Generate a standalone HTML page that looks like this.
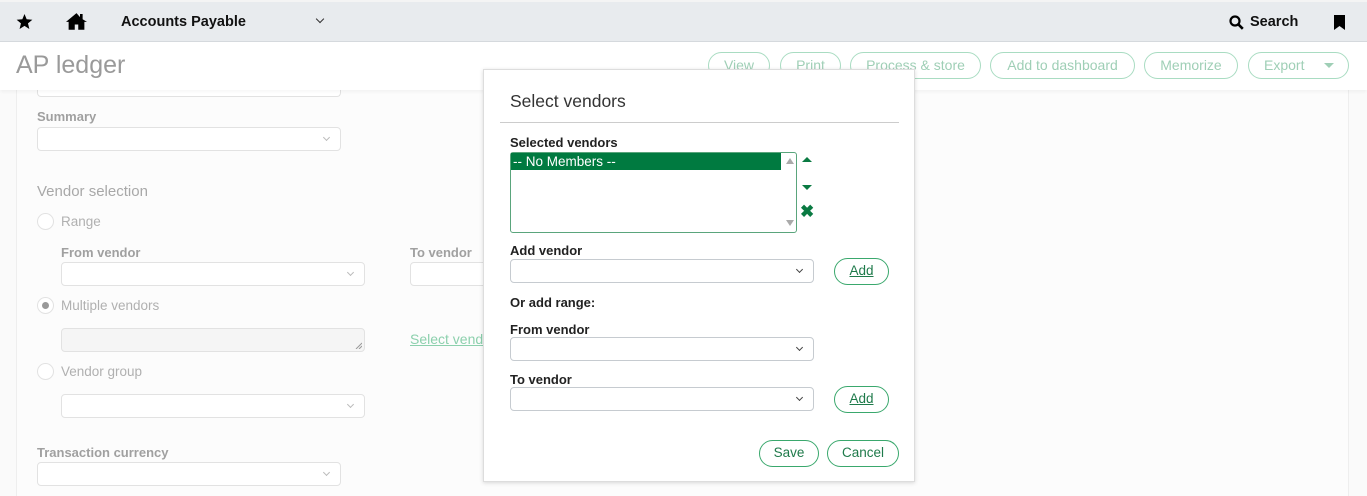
<!DOCTYPE html>
<html><head><style>
*{box-sizing:border-box;margin:0;padding:0}
body{width:1367px;height:496px;overflow:hidden;background:#fafafa;font-family:"Liberation Sans",sans-serif;position:relative}
.a{position:absolute}
.top{left:0;top:0;width:1367px;height:42px;background:#e8ebee;border-bottom:1px solid #d5d9dd;border-top:2px solid #f4f4f4}
.hdr{left:0;top:42px;width:1367px;height:48px;background:#fff;box-shadow:0 2px 3px rgba(0,0,0,.04);z-index:2}
.pbtn{position:absolute;top:52px;height:27px;border:1.5px solid #a9dcc2;border-radius:14px;color:#9fcfb6;font-size:14px;line-height:24px;text-align:center;background:#fff;z-index:3}
.lbl{position:absolute;font-size:13px;color:#a0a0a0;font-weight:bold}
.sel{position:absolute;height:24px;border:1px solid #e2e2e2;border-radius:4px;background:#fff}
.sel:after{content:"";position:absolute;right:11px;top:7px;width:4px;height:4px;border-right:1px solid #bbb;border-bottom:1px solid #bbb;transform:rotate(45deg)}
.rad{position:absolute;width:17px;height:17px;border:1px solid #e2e2e2;border-radius:50%;background:#fff}
.rt{position:absolute;font-size:13.5px;color:#b0b0b0}
.modal{left:483px;top:69px;width:432px;height:413px;background:#fff;border:1px solid #ddd;box-shadow:0 1px 4px rgba(0,0,0,.15);z-index:5}
.ml{position:absolute;font-size:13px;color:#222;font-weight:bold}
.ms{position:absolute;height:24px;border:1px solid #c6cbd0;border-radius:4px;background:#fff}
.ms:after{content:"";position:absolute;right:11px;top:7px;width:4px;height:4px;border-right:1.3px solid #444;border-bottom:1.3px solid #444;transform:rotate(45deg)}
.gb{position:absolute;height:27px;border:1.5px solid #3aa86d;border-radius:14px;color:#1e7a4a;font-size:13.5px;line-height:24px;text-align:center;background:#fff}
</style></head><body>
<div class="a top">
 <svg class="a" style="left:16px;top:12px" width="17" height="16" viewBox="0 0 24 23"><path d="M12 0l3.1 7.6 8.2.6-6.3 5.3 2 8L12 17.1 4.9 21.5l2-8L.7 8.2l8.2-.6z" fill="#000"/></svg>
 <svg class="a" style="left:66px;top:10px" width="21" height="18" viewBox="0 0 24 20"><path d="M12 1L0 11h3v9h7v-6h4v6h7v-9h3L19 8V2h-3v3.5z" fill="#000"/></svg>
 <div class="a" style="left:121px;top:12px;font-size:14.5px;font-weight:bold;color:#111">Accounts Payable</div>
 <div class="a" style="left:317px;top:14px;width:6px;height:6px;border-right:1.5px solid #333;border-bottom:1.5px solid #333;transform:rotate(45deg)"></div>
 <svg class="a" style="left:1229px;top:13px" width="15" height="15" viewBox="0 0 15 15"><circle cx="6" cy="6" r="4.5" stroke="#000" stroke-width="2.2" fill="none"/><path d="M9.3 9.3l4.5 4.5" stroke="#000" stroke-width="2.6"/></svg>
 <div class="a" style="left:1250px;top:12px;font-size:14.5px;font-weight:bold;color:#111">Search</div>
 <svg class="a" style="left:1334px;top:13px" width="11" height="15" viewBox="0 0 11 15"><path d="M0 0h11v15l-5.5-4L0 15z" fill="#000"/></svg>
</div>
<div class="a hdr">
 <div class="a" style="left:16px;top:9px;font-size:25px;color:#9a9a9a">AP ledger</div>
</div>
<div class="pbtn" style="left:708px;width:62px">View</div>
<div class="pbtn" style="left:780px;width:61px">Print</div>
<div class="pbtn" style="left:850px;width:131px">Process &amp; store</div>
<div class="pbtn" style="left:990px;width:145px">Add to dashboard</div>
<div class="pbtn" style="left:1144px;width:94px">Memorize</div>
<div class="pbtn" style="left:1248px;width:101px;text-align:left;padding-left:15px">Export<span style="position:absolute;right:14px;top:10px;border-left:5px solid transparent;border-right:5px solid transparent;border-top:5px solid #9fcfb6"></span></div>

<div class="a" style="left:16px;top:90px;width:1333px;height:406px;background:#fcfcfc;border-left:1px solid #eee;border-right:1px solid #eee"></div>
<div class="sel" style="left:37px;top:76px;width:304px;height:21px;border-top:none;border-radius:0 0 4px 4px"></div>
<div class="lbl" style="left:37px;top:109px">Summary</div>
<div class="sel" style="left:37px;top:127px;width:304px"></div>
<div class="a" style="left:37px;top:183px;font-size:15px;color:#a8a8a8">Vendor selection</div>
<div class="rad" style="left:37px;top:213px"></div><div class="rt" style="left:61px;top:214px">Range</div>
<div class="lbl" style="left:61px;top:245px">From vendor</div>
<div class="sel" style="left:61px;top:262px;width:304px"></div>
<div class="lbl" style="left:410px;top:245px">To vendor</div>
<div class="sel" style="left:410px;top:262px;width:304px"></div>
<div class="rad" style="left:37px;top:297px"><div class="a" style="left:4px;top:4px;width:7px;height:7px;border-radius:50%;background:#999"></div></div>
<div class="rt" style="left:61px;top:298px">Multiple vendors</div>
<div class="a" style="left:61px;top:328px;width:304px;height:24px;border:1px solid #e2e2e2;border-radius:4px;background:#f5f5f5"><svg class="a" style="right:2px;bottom:2px" width="7" height="7" viewBox="0 0 7 7"><path d="M1 7L7 1M4 7L7 4" stroke="#999" stroke-width="1"/></svg></div>
<div class="a" style="left:410px;top:331px;font-size:14px;color:#8cd0ad;text-decoration:underline">Select vendors</div>
<div class="rad" style="left:37px;top:363px"></div><div class="rt" style="left:61px;top:364px">Vendor group</div>
<div class="sel" style="left:61px;top:394px;width:304px"></div>
<div class="lbl" style="left:37px;top:445px">Transaction currency</div>
<div class="sel" style="left:37px;top:462px;width:304px"></div>

<div class="a modal">
 <div class="a" style="left:26px;top:21px;font-size:17.5px;color:#333">Select vendors</div>
 <div class="a" style="left:16px;top:52px;width:399px;height:1px;background:#ccc"></div>
 <div class="ml" style="left:26px;top:65px">Selected vendors</div>
 <div class="a" style="left:26px;top:82px;width:287px;height:81px;border:1px solid #5aa57c;border-radius:3px;background:#fff">
  <div class="a" style="left:0;top:0;width:270px;height:17px;background:#007a40;color:#fff;font-size:13.5px;line-height:17px;padding-left:2px">-- No Members --</div>
  <div class="a" style="left:275px;top:5px;border-left:4px solid transparent;border-right:4px solid transparent;border-bottom:6px solid #aaa"></div>
  <div class="a" style="left:275px;top:67px;border-left:4px solid transparent;border-right:4px solid transparent;border-top:6px solid #aaa"></div>
 </div>
 <div class="a" style="left:318px;top:87px;border-left:5px solid transparent;border-right:5px solid transparent;border-bottom:5px solid #0a7a42"></div>
 <div class="a" style="left:318px;top:115px;border-left:5px solid transparent;border-right:5px solid transparent;border-top:5px solid #0a7a42"></div>
 <div class="a" style="left:316px;top:133px;font-size:17px;font-weight:bold;color:#0a7a42;line-height:17px">✖</div>
 <div class="ml" style="left:26px;top:173px">Add vendor</div>
 <div class="ms" style="left:26px;top:189px;width:304px"></div>
 <div class="gb" style="left:350px;top:188px;width:55px"><u>Add</u></div>
 <div class="ml" style="left:26px;top:225px">Or add range:</div>
 <div class="ml" style="left:26px;top:252px">From vendor</div>
 <div class="ms" style="left:26px;top:267px;width:304px"></div>
 <div class="ml" style="left:26px;top:302px">To vendor</div>
 <div class="ms" style="left:26px;top:317px;width:304px"></div>
 <div class="gb" style="left:350px;top:316px;width:55px"><u>Add</u></div>
 <div class="gb" style="left:275px;top:370px;width:60px">Save</div>
 <div class="gb" style="left:343px;top:370px;width:72px">Cancel</div>
</div>
</body></html>
